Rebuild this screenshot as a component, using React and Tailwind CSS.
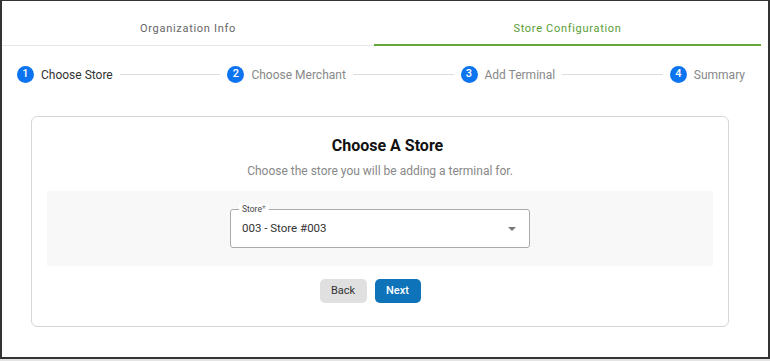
import { Fragment } from 'react';

export default function App() {
  const steps = [
    { n: 1, label: 'Choose Store', active: true },
    { n: 2, label: 'Choose Merchant' },
    { n: 3, label: 'Add Terminal' },
    { n: 4, label: 'Summary' },
  ];

  return (
    <div className="w-[770px] h-[361px] bg-[#e4e4e4] font-['Roboto',sans-serif]">
      <div className="h-[359px] bg-white border-2 border-t-[1.5px] border-[#333]">
        <div className="w-[759px]">
          {/* tabs */}
          <div className="flex h-[45px]">
            <div className="w-[372px] flex items-center justify-center border-b border-[#e6e6e6] text-[11px] tracking-[0.7px] text-[#666] pt-[12px]">
              Organization Info
            </div>
            <div className="w-[387px] flex items-center justify-center border-b-2 border-[#64a83a] text-[11px] tracking-[0.7px] text-[#5a9d35] pt-[13px]">
              Store Configuration
            </div>
          </div>

          {/* stepper */}
          <div className="flex items-center pl-[15px] pr-[16px] pt-[19px] h-[38px]">
            {steps.map((s, i) => (
              <Fragment key={s.n}>
                <div className="flex items-center">
                  <span className="w-[17px] h-[17px] rounded-full bg-[#0d74f0] text-white text-[11px] font-medium flex items-center justify-center">
                    {s.n}
                  </span>
                  <span className={`ml-[7px] text-[12px] ${s.active ? 'text-[#333]' : 'text-[#888]'}`}>
                    {s.label}
                  </span>
                </div>
                {i < steps.length - 1 && <div className="flex-1 h-px bg-[#dcdcdc] mx-[7px]" />}
              </Fragment>
            ))}
          </div>

          {/* card */}
          <div className="ml-[29px] mt-[32px] w-[698px] h-[211px] border border-[#d6d6d6] rounded-[6px] px-[15px] pt-[20px]">
            <h2 className="text-center text-[16px] font-bold text-[#111] leading-[18px] pl-[15px]">Choose A Store</h2>
            <p className="text-center text-[12px] text-[#888] mt-[8px] leading-[16px]">
              Choose the store you will be adding a terminal for.
            </p>
            <div className="mt-[12px] bg-[#f8f8f8] h-[75px] flex items-center justify-center">
              <div className="relative w-[300px] h-[39px] border border-[#aaa] rounded-[3px] bg-white flex items-center pl-[11px] pr-[12px]">
                <span className="absolute -top-[6px] left-[8px] bg-white px-[3px] text-[8.5px] leading-[10px] text-[#444]">
                  Store<span className="text-[#888]">*</span>
                </span>
                <span className="flex-1 text-[11.5px] text-[#333]">003 - Store #003</span>
                <svg width="8" height="4" viewBox="0 0 8 4" className="mr-[1px]">
                  <path d="M0 0 L8 0 L4 4 Z" fill="#777" />
                </svg>
              </div>
            </div>
            <div className="flex justify-center gap-[8px] mt-[13px] pr-[20px]">
              <button className="w-[47px] h-[24px] rounded-[5px] bg-[#e0e0e0] text-[11px] text-[#333]">Back</button>
              <button className="w-[46px] h-[24px] rounded-[5px] bg-[#0e73b9] text-[11px] text-white font-medium">Next</button>
            </div>
          </div>
        </div>
      </div>
    </div>
  );
}
